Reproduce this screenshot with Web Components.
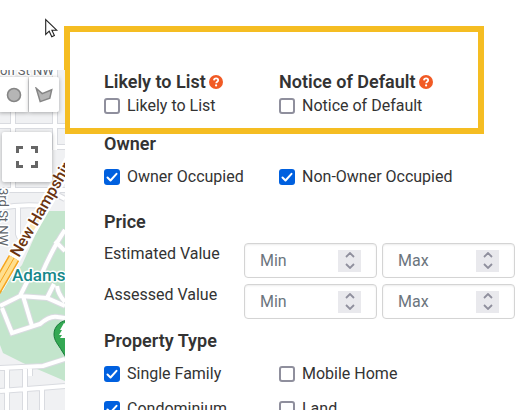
<!DOCTYPE html>
<html lang="en">
<head>
<meta charset="utf-8">
<title>Property filters</title>
<style>
  body { margin: 0; background: #fff; color: #333; font: 16px/24px Roboto, sans-serif; overflow: hidden; }
</style>
</head>
<body>
<app-page>
  <area-map slot="map"></area-map>
  <filter-panel></filter-panel>
</app-page>

<script>
const define = (name, html, setup) => customElements.define(name, class extends HTMLElement {
  connectedCallback() {
    if (this.shadowRoot) return;
    const t = document.createElement('template');
    t.innerHTML = html;
    this.attachShadow({ mode: 'open' }).append(t.content.cloneNode(true));
    if (setup) setup(this, this.shadowRoot);
  }
});

const roads = 'M0 126H65M13 108V190M55 70V150M55 147H65M0 190H65M0 208Q20 204 45 206M18 206V234Q20 240 24 242M42 273Q54 246 65 230M55 241L65 251M0 306L20 296 47 298 65 306M23 296L32 326M2 308L12 333 40 324Q50 315 58 317L65 318M20 296L30 276M47 298L54 284M57 286Q58 294 65 302M0 368L43 366 65 359M7 368V410M25 368V410M0 391L40 388 65 386M42 388V410M30 367V376M48 190L65 199';

define('app-page', `
  <style>
    :host { display: grid; grid-template-columns: 65px 1fr; height: 100vh; overflow: hidden; position: relative; }
    .map { padding-top: 70px; display: grid; min-height: 0; }
    main { min-width: 0; }
    .pointer { position: absolute; left: 45px; top: 18px; }
  </style>
  <div class="map"><slot name="map"></slot></div>
  <main><slot></slot></main>
  <svg class="pointer" width="14" height="22" viewBox="0 0 14 22" aria-hidden="true">
    <path d="M.7 1.5v15l3.500-3.300 2.600 5.600 2.600-1.200-2.500-5.400h4.800z" fill="#fff" stroke="#222" stroke-width="1.100"/>
  </svg>`);

define('area-map', `
  <style>
    :host { display: block; position: relative; overflow: hidden; background: #f0f1f3; }
    svg { display: block; }
    button { position: absolute; border: 0; padding: 0; background: #fff; display: grid; place-items: center; box-shadow: 0 1px 4px rgba(0,0,0,.3); }
    .circle { left: -1px; top: 7px; width: 29px; height: 35px; }
    .shape { left: 29px; top: 7px; width: 30px; height: 35px; border-radius: 0 2px 2px 0; }
    .full { left: 2px; top: 62px; width: 50px; height: 50px; border-radius: 2px; }
  </style>
  <svg width="65" height="340" viewBox="0 70 65 340" role="img" aria-label="Street map">
    <path d="M46 211H65V381L23 363 3 353 0 345V290L22 265z" fill="#c3e5cc"/>
    <g fill="none">
      <path d="${roads}" stroke="#d9dbe0" stroke-width="6"/>
      <path d="${roads}" stroke="#fff" stroke-width="4"/>
    </g>
    <path d="M-3 288L72 158" stroke="#fff" stroke-width="13"/>
    <path d="M30 231L72 158" stroke="#fde9b8" stroke-width="6"/>
    <path d="M-5 291L14 258" stroke="#f5a51e" stroke-width="12"/>
    <path d="M-5 291L14 258" stroke="#ffdf8e" stroke-width="9"/>
    <path d="M-5 291L14 258" stroke="#f5a51e" stroke-width="1"/>
    <g font-family="Roboto, sans-serif" stroke="#fff" stroke-width="3" stroke-linejoin="round" paint-order="stroke">
      <text x="0" y="75" font-size="13" fill="#60646a">on St NW</text>
      <text transform="translate(-1 188) rotate(90)" font-size="13" fill="#60646a">3rd St NW</text>
      <text transform="translate(19 258) rotate(-60)" font-size="16" font-weight="500" fill="#6b3410">New Hampshire Ave</text>
      <text x="12" y="281" font-size="17" font-weight="500" fill="#16888a">Adams</text>
    </g>
    <path d="M70 320c-9 0-16 6-16 14 0 7 4 10 8 17 4 6 6 10 8 16z" fill="#34a853" stroke="#167a38"/>
    <path d="M64 323l-4 7h2l-3 5h3l-2 3h6v-14z" fill="#fff"/>
  </svg>
  <button class="circle" aria-label="Draw a circle"><svg width="16" height="16" viewBox="0 0 16 16"><circle cx="8" cy="8" r="6.500" fill="#b5b5b5" stroke="#858585" stroke-width="1.600"/></svg></button>
  <button class="shape" aria-label="Draw a shape"><svg width="18" height="16" viewBox="0 0 18 16"><path d="M1.200 1.200L7.200 6.600 16.700 2.800 14.800 11.200 5.200 14.600z" fill="#b5b5b5" stroke="#858585" stroke-width="1.500"/></svg></button>
  <button class="full" aria-label="Full screen"><svg width="22" height="22" viewBox="0 0 22 22"><path d="M1.500 7V1.500H7M15 1.500h5.500V7M20.500 15v5.500H15M7 20.500H1.500V15" fill="none" stroke="#666" stroke-width="3"/></svg></button>`);

define('help-tip', `
  <style>
    :host { display: inline-flex; }
    button { border: 0; padding: 0; background: none; display: block; }
    svg { display: block; }
  </style>
  <button aria-label="Help"><svg width="14" height="14" viewBox="0 0 14 14">
    <circle cx="7" cy="7" r="7" fill="#f15a24"/>
    <path d="M4.900 5.400C5 4.100 5.900 3.400 7.100 3.400c1.200 0 2.100.7 2.100 1.800 0 1.500-2 1.500-2 3" fill="none" stroke="#fff" stroke-width="1.700"/>
    <circle cx="7.100" cy="10.400" r="1.100" fill="#fff"/>
  </svg></button>`);

define('section-title', `
  <style>
    :host { display: block; }
    h3 { margin: 0; font-size: 18px; line-height: 20px; font-weight: 600; display: flex; align-items: center; gap: 3px; }
  </style>
  <h3><slot></slot></h3>`);

define('check-option', `
  <style>
    :host { display: block; }
    label { display: flex; align-items: center; gap: 7px; white-space: nowrap; }
    input { appearance: none; flex: none; box-sizing: border-box; width: 16px; height: 16px; margin: 0; border: 2px solid #8f8f9d; border-radius: 3px; background: #fff; }
    input:checked { border: 0; background: #0060df; }
    .box { display: grid; }
    .box > * { grid-area: 1 / 1; }
    svg { visibility: hidden; pointer-events: none; }
    input:checked + svg { visibility: visible; }
  </style>
  <label><span class="box"><input type="checkbox"><svg width="16" height="16" viewBox="0 0 16 16"><path d="M3.500 8.500l3 3L12.500 4.800" fill="none" stroke="#fff" stroke-width="2" stroke-linecap="round" stroke-linejoin="round"/></svg></span><slot></slot></label>`,
  (el, root) => { root.querySelector('input').checked = el.hasAttribute('checked'); });

define('number-box', `
  <style>
    :host { display: flex; align-items: center; box-sizing: border-box; height: 35px; min-width: 0; padding: 0 15px; border: 1px solid #d4d4d4; border-radius: 4px; box-shadow: inset 0 1px 2px rgba(0,0,0,.08); }
    input { appearance: textfield; flex: 1; min-width: 0; width: 0; border: 0; padding: 0; margin: 0; background: none; color: #333; font: inherit; outline: 0; }
    input::-webkit-inner-spin-button { appearance: none; }
    input::placeholder { color: #6c757d; opacity: 1; }
    .spin { display: grid; width: 23px; background: #e9e9ed; }
    button { border: 0; padding: 0; height: 11px; background: none; display: grid; place-items: center; }
    svg { display: block; }
  </style>
  <input type="number">
  <span class="spin">
    <button aria-label="Increase"><svg width="10" height="6" viewBox="0 0 10 6"><path d="M1 5l4-4 4 4" fill="none" stroke="#8f8f9d" stroke-width="1.800"/></svg></button>
    <button aria-label="Decrease"><svg width="10" height="6" viewBox="0 0 10 6"><path d="M1 1l4 4 4-4" fill="none" stroke="#8f8f9d" stroke-width="1.800"/></svg></button>
  </span>`,
  (el, root) => {
    const i = root.querySelector('input');
    i.placeholder = el.getAttribute('hint');
    i.setAttribute('aria-label', el.getAttribute('label'));
    const [up, down] = root.querySelectorAll('button');
    up.onclick = () => i.stepUp();
    down.onclick = () => i.stepDown();
  });

define('filter-panel', `
  <style>
    :host { display: block; padding: 26px 17px 0 0; }
    .pair { display: grid; grid-template-columns: 175px 1fr; row-gap: 11px; }
    .signals { box-sizing: border-box; width: 420px; max-width: 100%; margin-left: -1px; padding: 40px 0 10px 34px; row-gap: 2px; border: 6px solid #f5bd22; }
    section { padding-left: 39px; margin-bottom: 12px; }
    section > .pair { padding: 11px 0; }
    .range { display: grid; grid-template-columns: 135px 1fr 1fr; gap: 6px 5px; padding-top: 11px; }
    .range > span { line-height: 22px; }
  </style>
  <div class="signals pair">
    <section-title>Likely to List<help-tip></help-tip></section-title>
    <section-title>Notice of Default<help-tip></help-tip></section-title>
    <check-option>Likely to List</check-option>
    <check-option>Notice of Default</check-option>
  </div>
  <section>
    <section-title>Owner</section-title>
    <div class="pair">
      <check-option checked>Owner Occupied</check-option>
      <check-option checked>Non-Owner Occupied</check-option>
    </div>
  </section>
  <section>
    <section-title>Price</section-title>
    <div class="range">
      <span>Estimated Value</span>
      <number-box hint="Min" label="Estimated Value, minimum"></number-box>
      <number-box hint="Max" label="Estimated Value, maximum"></number-box>
      <span>Assessed Value</span>
      <number-box hint="Min" label="Assessed Value, minimum"></number-box>
      <number-box hint="Max" label="Assessed Value, maximum"></number-box>
    </div>
  </section>
  <section>
    <section-title>Property Type</section-title>
    <div class="pair">
      <check-option checked>Single Family</check-option>
      <check-option>Mobile Home</check-option>
      <check-option checked>Condominium</check-option>
      <check-option>Land</check-option>
    </div>
  </section>`);
</script>
</body>
</html>
